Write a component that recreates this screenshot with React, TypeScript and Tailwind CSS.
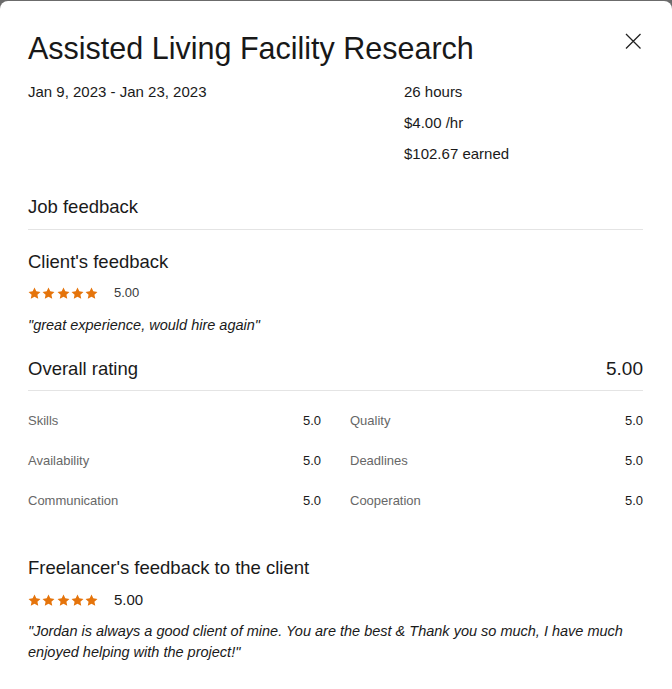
import React from "react";

const Star = () => (
  <svg viewBox="0 0 24 24" className="h-[13px] w-[13px]" fill="#e5740b">
    <path d="M12 1l3.3 7 7.7 1-5.6 5.3 1.5 7.6L12 18.2l-6.9 3.7 1.5-7.6L1 9l7.7-1z" />
  </svg>
);

const Stars = ({ score, big }: { score: string; big?: boolean }) => (
  <div className="flex h-4 items-center">
    <div className="flex gap-[1.25px]">
      <Star />
      <Star />
      <Star />
      <Star />
      <Star />
    </div>
    <span
      className={
        big
          ? "ml-4 text-[15px] leading-4 text-[#1a1a1a]"
          : "ml-4 text-[13px] leading-4 text-[#3a3a3a]"
      }
    >
      {score}
    </span>
  </div>
);

const ratings = [
  ["Skills", "5.0", "Quality", "5.0"],
  ["Availability", "5.0", "Deadlines", "5.0"],
  ["Communication", "5.0", "Cooperation", "5.0"],
];

export default function App() {
  return (
    <div
      className="min-h-[689px] bg-[#6b6b6b] pt-px text-[#1a1a1a]"
      style={{ fontFamily: '"Liberation Sans", Arial, sans-serif' }}
    >
      <div className="min-h-[688px] rounded-t-lg bg-white pb-8 pl-7 pr-[29px] pt-[30px]">
        <div className="flex items-start justify-between">
          <h1 className="text-[30.5px] leading-[34px] text-[#181818]">
            Assisted Living Facility Research
          </h1>
          <button className="mr-0 p-0.5">
            <svg viewBox="0 0 16 16" className="h-4 w-4" stroke="#222" strokeWidth="1.3" fill="none">
              <path d="M1 1l14.5 14.5M15.5 1L1 15.5" />
            </svg>
          </button>
        </div>

        <div className="mt-[17px] flex text-[15px] leading-5">
          <div className="w-[376px]">Jan 9, 2023 - Jan 23, 2023</div>
          <div className="flex flex-col gap-[11px]">
            <span>26 hours</span>
            <span>$4.00 /hr</span>
            <span>$102.67 earned</span>
          </div>
        </div>

        <h2 className="mt-[31px] border-b border-[#e4e4e4] pb-[10px] text-[18.5px] leading-6">
          Job feedback
        </h2>

        <h3 className="mt-5 text-[18.5px] leading-6">Client's feedback</h3>
        <div className="mt-[11px]">
          <Stars score="5.00" />
        </div>
        <p className="mt-[14px] text-[14.5px] italic leading-5">
          "great experience, would hire again"
        </p>

        <div className="mt-[22px] flex justify-between border-b border-[#e4e4e4] pb-[9px] text-[18.5px] leading-6">
          <span>Overall rating</span>
          <span className="text-[19px]">5.00</span>
        </div>

        <div className="mt-5 grid grid-cols-2 gap-x-[29px] gap-y-5 text-[13px] leading-5">
          {ratings.map((r) => (
            <React.Fragment key={r[0]}>
              <div className="flex justify-between">
                <span className="text-[#676767]">{r[0]}</span>
                <span>{r[1]}</span>
              </div>
              <div className="flex justify-between">
                <span className="text-[#676767]">{r[2]}</span>
                <span>{r[3]}</span>
              </div>
            </React.Fragment>
          ))}
        </div>

        <h3 className="mt-[45px] text-[18.5px] leading-6">
          Freelancer's feedback to the client
        </h3>
        <div className="mt-3">
          <Stars score="5.00" big />
        </div>
        <p className="mt-[13px] text-[14.5px] italic leading-[21px]">
          "Jordan is always a good client of mine. You are the best &amp; Thank you so much, I have much
          enjoyed helping with the project!"
        </p>
      </div>
    </div>
  );
}
